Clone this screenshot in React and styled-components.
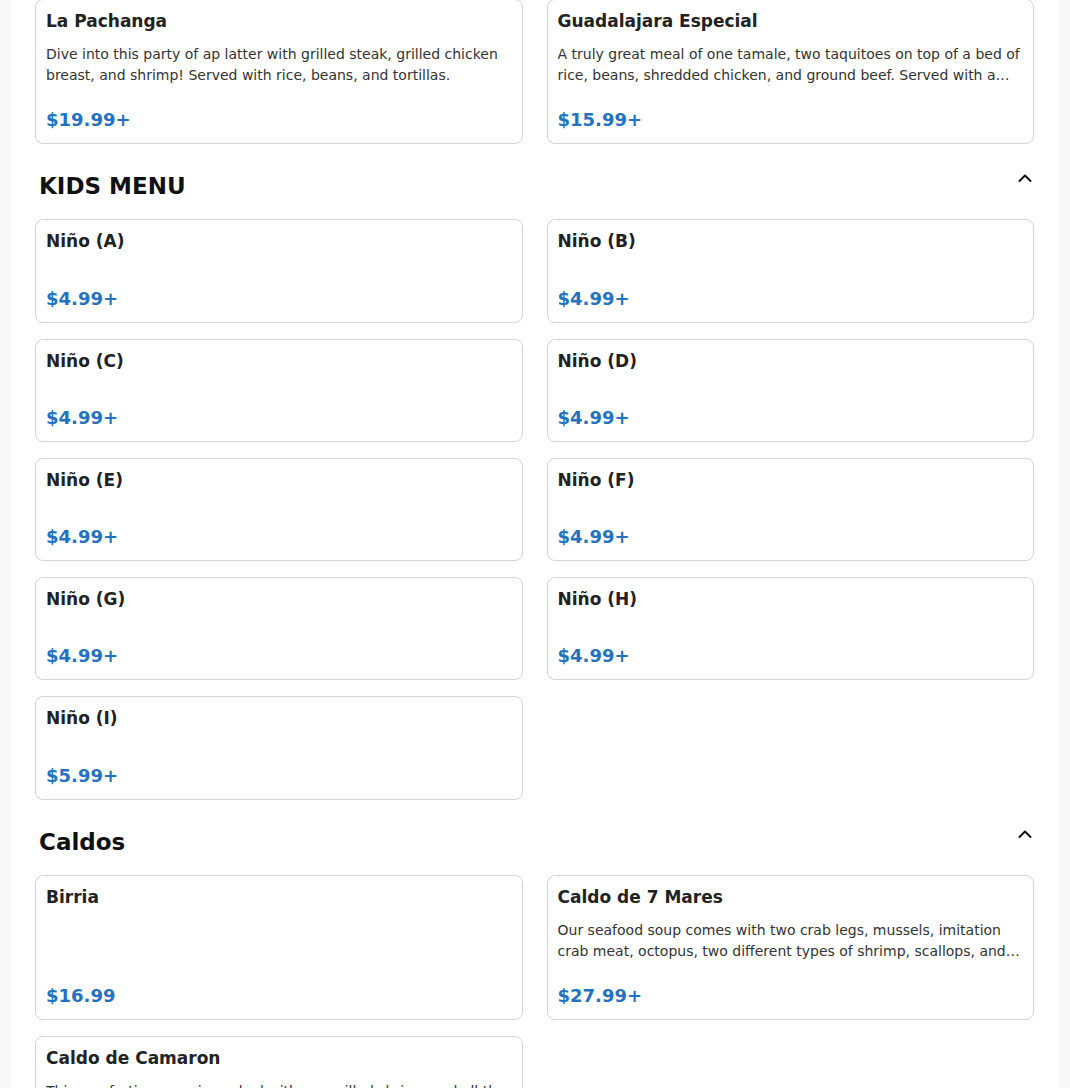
import React from 'react';
import styled, { createGlobalStyle } from 'styled-components';

const GlobalStyle = createGlobalStyle`
    body {
        margin: 0;
        background: #f8f8f9;
        font-family: "DejaVu Sans", "Liberation Sans", sans-serif;
    }
`;

const Page = styled.div`
    width: 1048px;
    margin: 0 auto;
    background: #ffffff;
    padding: 0 25px 0 24px;
    box-sizing: border-box;
    min-height: 1088px;
    overflow: hidden;
`;

const SectionHeader = styled.div`
    display: flex;
    justify-content: space-between;
    align-items: flex-start;
    padding: 0 2px 0 4px;
    margin: 28px 0 19px;
`;

const SectionTitle = styled.h2`
    margin: 0;
    font-size: 23px;
    line-height: 28px;
    font-weight: 700;
    color: #111111;
`;

const Toggle = styled.svg`
    margin-top: 1px;
`;

const Grid = styled.div`
    display: grid;
    grid-template-columns: 1fr 1fr;
    column-gap: 24px;
    row-gap: 16px;
    margin-top: ${(p) => (p.$top ? '-1px' : '0')};
`;

const Card = styled.div`
    display: flex;
    flex-direction: column;
    border: 1px solid #d4d4d4;
    border-radius: 8px;
    padding: 10px;
    background: #ffffff;
`;

const ItemName = styled.div`
    font-size: 17px;
    line-height: 22.25px;
    font-weight: 700;
    color: #222222;
    margin-bottom: 12px;
`;

const ItemDesc = styled.div`
    font-size: 14px;
    line-height: 21px;
    color: #333333;
    display: -webkit-box;
    -webkit-line-clamp: 2;
    -webkit-box-orient: vertical;
    overflow: hidden;
`;

const ItemPrice = styled.div`
    margin-top: auto;
    padding-top: 20px;
    font-size: 18px;
    line-height: 27px;
    font-weight: 700;
    color: #2372c1;
`;

const ChevronUp = () => (
    <Toggle width="14" height="10" viewBox="0 0 14 10">
        <polyline points="1.5,8 7,2.5 12.5,8" fill="none" stroke="#111" strokeWidth="2" strokeLinecap="round" strokeLinejoin="round" />
    </Toggle>
);

const topItems = [
    {
        name: 'La Pachanga',
        desc: 'Dive into this party of ap latter with grilled steak, grilled chicken breast, and shrimp! Served with rice, beans, and tortillas.',
        price: '$19.99+',
    },
    {
        name: 'Guadalajara Especial',
        desc: 'A truly great meal of one tamale, two taquitoes on top of a bed of rice, beans, shredded chicken, and ground beef. Served with a side of sour cream and guacamole.',
        price: '$15.99+',
    },
];

const kids = ['A', 'B', 'C', 'D', 'E', 'F', 'G', 'H', 'I'].map((l) => ({
    name: `Niño (${l})`,
    price: l === 'I' ? '$5.99+' : '$4.99+',
}));

const caldos = [
    { name: 'Birria', price: '$16.99' },
    {
        name: 'Caldo de 7 Mares',
        desc: 'Our seafood soup comes with two crab legs, mussels, imitation crab meat, octopus, two different types of shrimp, scallops, and fish. Served with rice and tortillas.',
        price: '$27.99+',
    },
    {
        name: 'Caldo de Camaron',
        desc: 'This comforting soup is packed with our grilled shrimp and all the vegetables you love. Served with rice and tortillas.',
        price: '$18.99+',
    },
];

const Item = ({ item }) => (
    <Card>
        <ItemName>{item.name}</ItemName>
        {item.desc && <ItemDesc>{item.desc}</ItemDesc>}
        <ItemPrice>{item.price}</ItemPrice>
    </Card>
);

const Section = ({ title, items }) => (
    <div>
        <SectionHeader>
            <SectionTitle>{title}</SectionTitle>
            <ChevronUp />
        </SectionHeader>
        <Grid>
            {items.map((item) => (
                <Item key={item.name} item={item} />
            ))}
        </Grid>
    </div>
);

const App = () => {
    return (
        <Page>
            <GlobalStyle />
            <Grid $top>
                {topItems.map((item) => (
                    <Item key={item.name} item={item} />
                ))}
            </Grid>
            <Section title="KIDS MENU" items={kids} />
            <Section title="Caldos" items={caldos} />
        </Page>
    );
};

export default App;
